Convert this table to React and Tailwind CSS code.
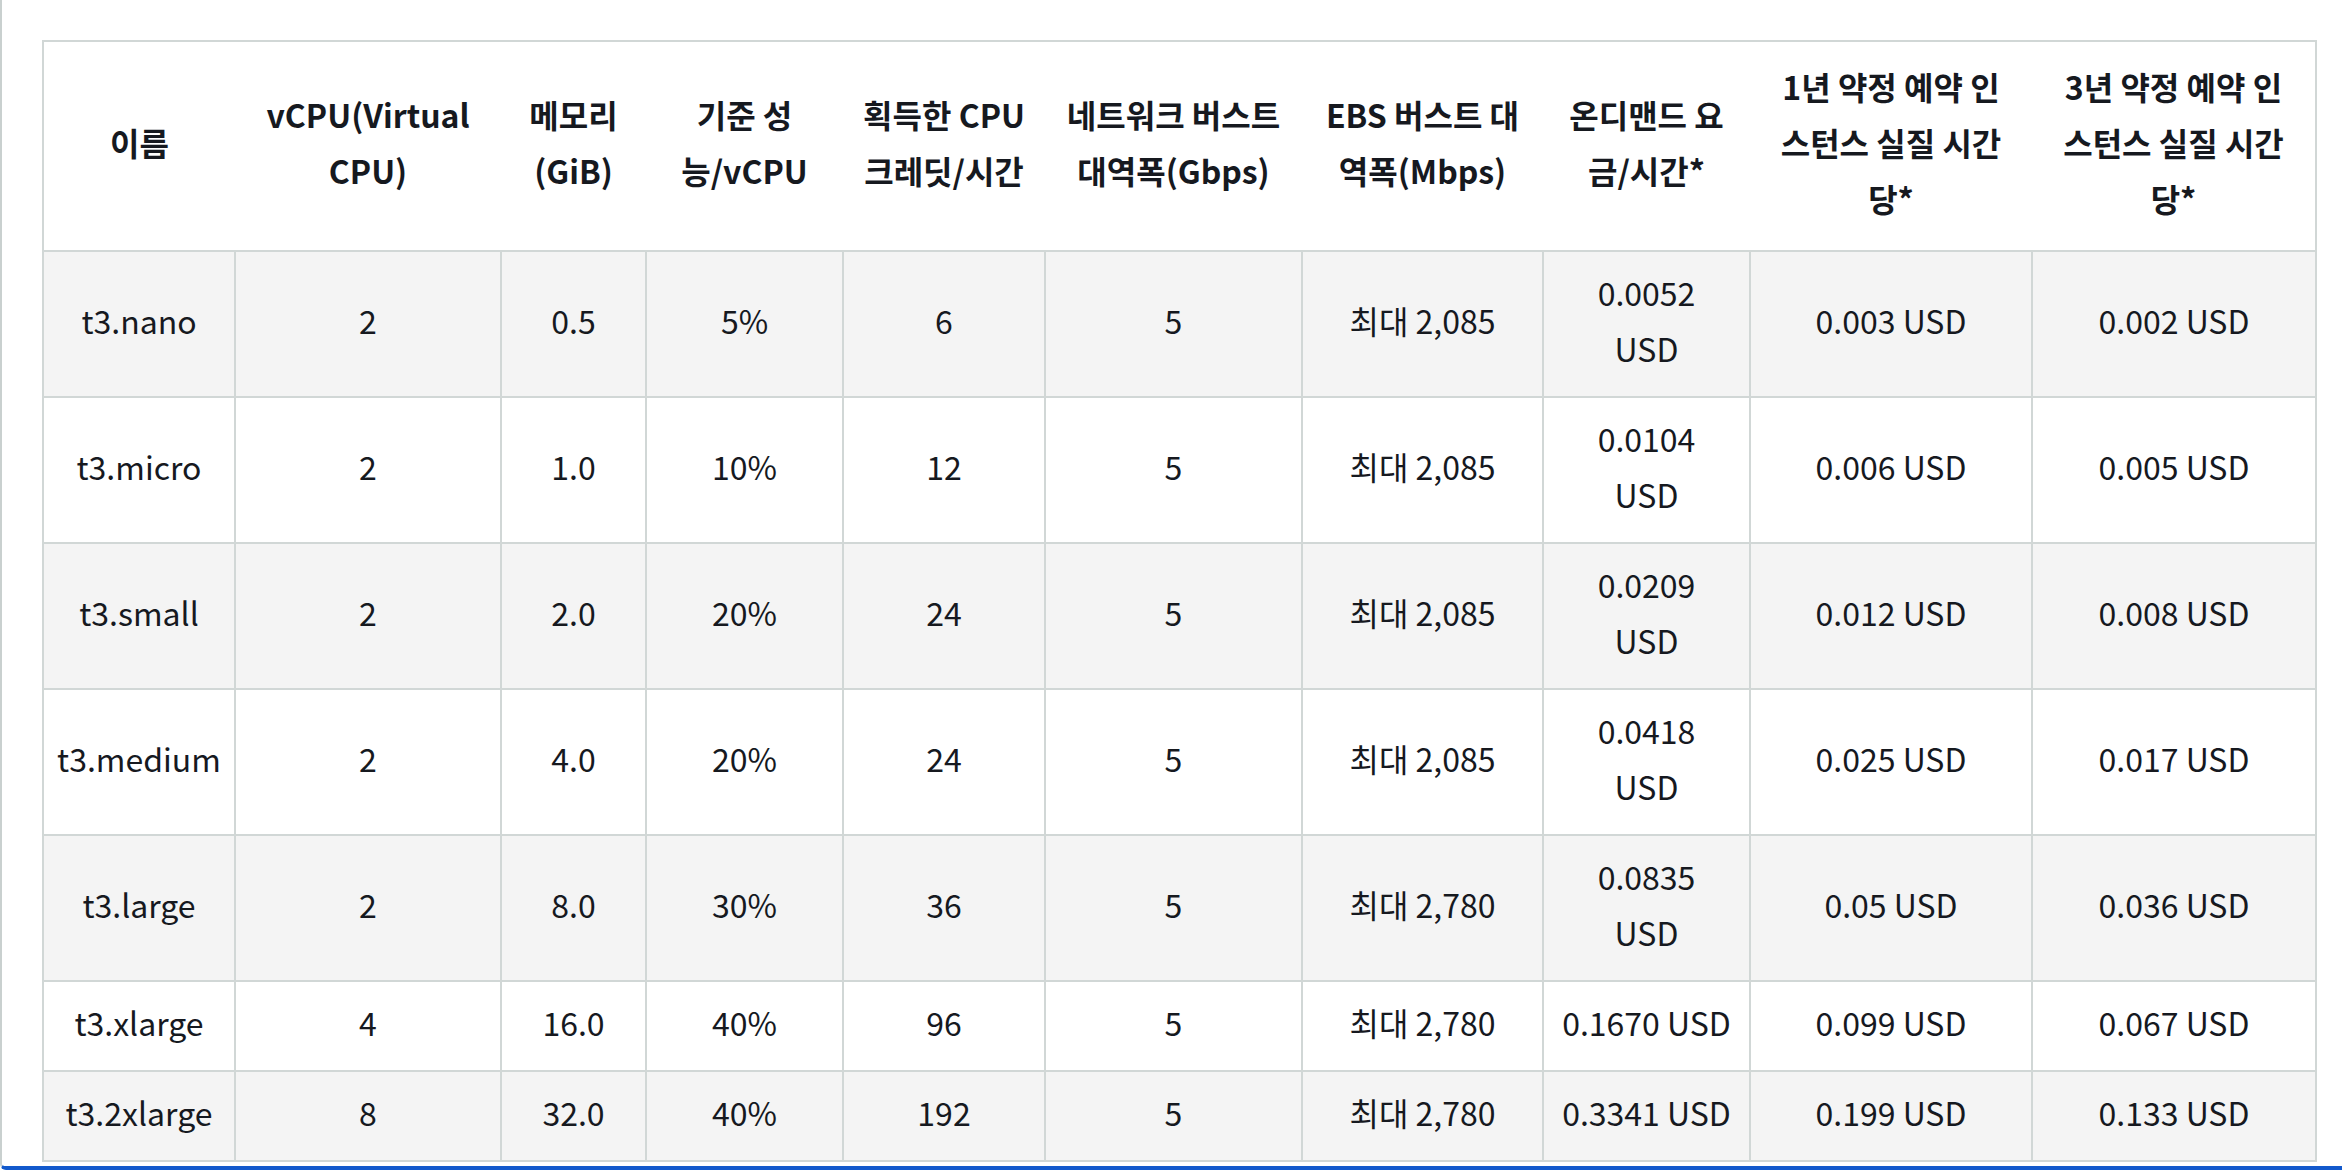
import React from "react";

// 컬럼 폭 (테두리 기준 px)
const COLS = [192, 266, 145, 197, 202, 257, 241, 207, 282, 284];

const HEADERS = [
  ["이름"],
  ["vCPU(Virtual", "CPU)"],
  ["메모리", "(GiB)"],
  ["기준 성", "능/vCPU"],
  ["획득한 CPU", "크레딧/시간"],
  ["네트워크 버스트", "대역폭(Gbps)"],
  ["EBS 버스트 대", "역폭(Mbps)"],
  ["온디맨드 요", "금/시간*"],
  ["1년 약정 예약 인", "스턴스 실질 시간", "당*"],
  ["3년 약정 예약 인", "스턴스 실질 시간", "당*"],
];

const ROWS = [
  ["t3.nano", "2", "0.5", "5%", "6", "5", "최대 2,085", ["0.0052", "USD"], "0.003 USD", "0.002 USD"],
  ["t3.micro", "2", "1.0", "10%", "12", "5", "최대 2,085", ["0.0104", "USD"], "0.006 USD", "0.005 USD"],
  ["t3.small", "2", "2.0", "20%", "24", "5", "최대 2,085", ["0.0209", "USD"], "0.012 USD", "0.008 USD"],
  ["t3.medium", "2", "4.0", "20%", "24", "5", "최대 2,085", ["0.0418", "USD"], "0.025 USD", "0.017 USD"],
  ["t3.large", "2", "8.0", "30%", "36", "5", "최대 2,780", ["0.0835", "USD"], "0.05 USD", "0.036 USD"],
  ["t3.xlarge", "4", "16.0", "40%", "96", "5", "최대 2,780", "0.1670 USD", "0.099 USD", "0.067 USD"],
  ["t3.2xlarge", "8", "32.0", "40%", "192", "5", "최대 2,780", "0.3341 USD", "0.199 USD", "0.133 USD"],
];

function Lines({ value }) {
  const lines = Array.isArray(value) ? value : [value];
  return lines.map((l, i) => (
    <React.Fragment key={i}>
      {i > 0 && <br />}
      {l}
    </React.Fragment>
  ));
}

export default function App() {
  return (
    <div
      className="min-h-[1174px] bg-white text-[#16191f]"
      style={{ fontFamily: '"Noto Sans CJK KR", "Noto Sans", sans-serif' }}
    >
      <div className="h-[1170px] border-l-2 border-b-4 border-l-[#c9d0cf] border-b-[#1259cc] rounded-bl-[6px] pl-[40px] pt-[40px]">
        <table className="w-[2275px] table-fixed border-collapse border-2 border-[#d1d7d6] text-[32px] leading-[56px] text-center">
          <colgroup>
            {COLS.map((w, i) => (
              <col key={i} style={{ width: w }} />
            ))}
          </colgroup>
          <thead>
            <tr className="bg-white">
              {HEADERS.map((h, i) => (
                <th
                  key={i}
                  className="px-[8px] pt-[16px] pb-[24px] font-bold align-middle whitespace-nowrap border-b-2 border-[#d1d7d6]"
                >
                  <Lines value={h} />
                </th>
              ))}
            </tr>
          </thead>
          <tbody>
            {ROWS.map((row, r) => (
              <tr key={r} className={r % 2 === 0 ? "bg-[#f4f4f4]" : "bg-white"}>
                {row.map((c, i) => (
                  <td
                    key={i}
                    className="px-[8px] pt-[12px] pb-[20px] align-middle whitespace-nowrap border-2 border-[#d1d7d6]"
                  >
                    <Lines value={c} />
                  </td>
                ))}
              </tr>
            ))}
          </tbody>
        </table>
      </div>
    </div>
  );
}
